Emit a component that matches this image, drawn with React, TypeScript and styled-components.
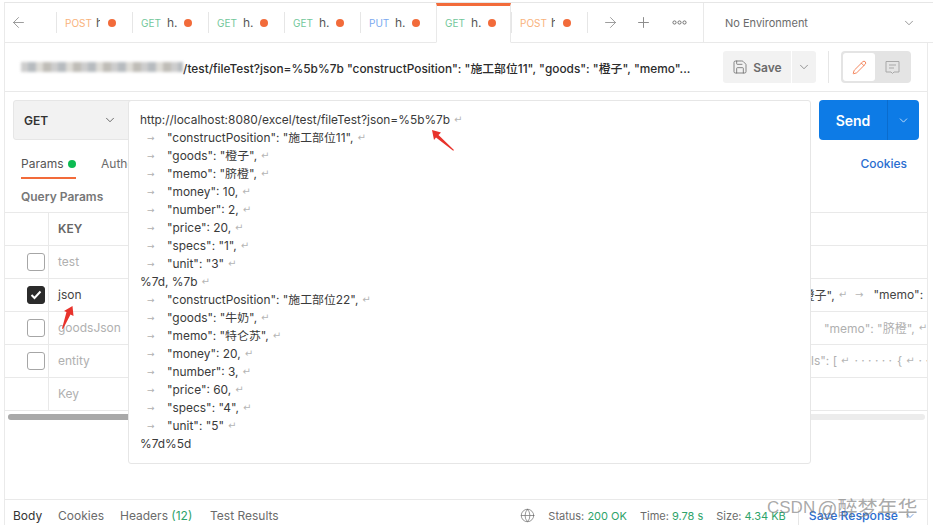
import React from "react";
import styled, { createGlobalStyle } from "styled-components";
import { ArrowLeft, ArrowRight, ChevronDown, Globe, Pencil, Plus, Save } from "lucide-react";

const GlobalStyle = createGlobalStyle`
  html, body { margin: 0; padding: 0; background: #fff; }
  body { font-family: Inter, "Noto Sans CJK SC", sans-serif; color: #333; overflow: hidden; }
`;

const Page = styled.div`
  position: relative;
  width: 933px;
  height: 525px;
  overflow: hidden;
  background: #fff;
  padding-top: 2px;
  box-sizing: border-box;
`;
const Frame = styled.div`
  height: 523px;
  border-top: 1px solid #e6e6e6;
  border-left: 1px solid #eaeaea;
  margin-left: 4px;
  display: flex;
  flex-direction: column;
  box-sizing: border-box;
`;
const TabBar = styled.div`
  height: 40px;
  display: flex;
  align-items: stretch;
  flex: none;
`;
const BackBox = styled.div`
  width: 51px;
  border-bottom: 1px solid #e9e9e9;
  box-sizing: border-box;
  display: flex;
  align-items: center;
  padding-left: 5px;
  color: #8c8c8c;
`;
const Tab = styled.div<{ $active?: boolean }>`
  width: ${(p) => (p.$active ? 75 : 76)}px;
  box-sizing: border-box;
  position: relative;
  display: flex;
  align-items: center;
  padding-left: ${(p) => (p.$active ? 8 : 9)}px;
  padding-bottom: ${(p) => (p.$active ? 3 : 0)}px;
  font-size: 10px;
  border-bottom: 1px solid ${(p) => (p.$active ? "transparent" : "#e9e9e9")};
  border-right: ${(p) => (p.$active ? "1px solid #e9e9e9" : "none")};
  border-left: ${(p) => (p.$active ? "1px solid #e9e9e9" : "none")};
  border-top: ${(p) => (p.$active ? "3px solid #f26b3a" : "none")};
  &::before {
    content: "";
    display: ${(p) => (p.$active ? "none" : "block")};
    position: absolute;
    left: 0;
    top: 9px;
    height: 21px;
    width: 1px;
    background: #e6e6e6;
  }
`;
const Method = styled.span<{ $color: string; $w: number }>`
  color: ${(p) => p.$color};
  width: ${(p) => p.$w}px;
  flex: none;
`;
const TabName = styled.span<{ $w: number; $clip: number }>`
  font-size: 12px;
  color: #555;
  width: ${(p) => p.$w}px;
  flex: none;
  white-space: nowrap;
  clip-path: inset(0 ${(p) => p.$clip}px 0 0);
`;
const Dot = styled.span`
  width: 8px;
  height: 8px;
  border-radius: 50%;
  background: #f26b3a;
  flex: none;
`;
const Tools = styled.div`
  width: 117px;
  box-sizing: border-box;
  border-bottom: 1px solid #e9e9e9;
  border-right: 1px solid #e9e9e9;
  display: flex;
  align-items: center;
  position: relative;
  color: #8c8c8c;
  &::before {
    content: "";
    position: absolute;
    left: 0;
    top: 9px;
    height: 21px;
    width: 1px;
    background: #e6e6e6;
  }
`;
const ToolSlot = styled.span<{ $w: number }>`
  width: ${(p) => p.$w}px;
  display: flex;
  justify-content: center;
  flex: none;
`;
const EnvBox = styled.div`
  flex: 1;
  border-bottom: 1px solid #e9e9e9;
  display: flex;
  align-items: center;
  justify-content: space-between;
  padding: 0 17px 0 21px;
  font-size: 11px;
  color: #6b6b6b;
`;
const Content = styled.div`
  flex: 1;
  min-height: 0;
  width: 922px;
  border-right: 1px solid #eaeaea;
  display: flex;
  flex-direction: column;
`;
const TitleRow = styled.div`
  height: 49px;
  flex: none;
  box-sizing: border-box;
  border-bottom: 1px solid #e9e9e9;
  display: flex;
  align-items: center;
  padding-left: 16px;
`;
const Blur = styled.span`
  display: block;
  width: 162px;
  height: 10px;
  flex: none;
  filter: blur(1.4px);
  background: repeating-linear-gradient(90deg, #c5c5c5 0 7px, #aab0b5 7px 15px, #d8d6d0 15px 22px, #b5b2ab 22px 30px);
  opacity: 0.85;
`;
const TitleText = styled.span`
  font-size: 11.85px;
  font-weight: 500;
  color: #2b2b2b;
  white-space: nowrap;
  width: 521px;
`;
const SaveBtn = styled.div`
  margin-left: 19px;
  width: 68px;
  height: 32px;
  background: #f2f2f2;
  border-radius: 3px 0 0 3px;
  display: flex;
  align-items: center;
  justify-content: center;
  gap: 5px;
  font-size: 12px;
  font-weight: 600;
  color: #6b6b6b;
`;
const SaveArrow = styled.div`
  margin-left: 1px;
  width: 24px;
  height: 32px;
  background: #f2f2f2;
  border-radius: 0 3px 3px 0;
  display: flex;
  align-items: center;
  justify-content: center;
  color: #6b6b6b;
`;
const VLine = styled.div`
  width: 1px;
  height: 32px;
  background: #e6e6e6;
  margin: 0 12px;
`;
const Toggle = styled.div`
  width: 70px;
  height: 32px;
  box-sizing: border-box;
  padding: 2px;
  background: #e4e4e4;
  border-radius: 4px;
  display: flex;
`;
const ToggleOn = styled.div`
  width: 32px;
  background: #fff;
  border-radius: 3px;
  display: flex;
  align-items: center;
  justify-content: center;
  color: #f26b3a;
`;
const ToggleOff = styled.div`
  flex: 1;
  display: flex;
  align-items: center;
  justify-content: center;
`;
const UrlRow = styled.div`
  height: 40px;
  flex: none;
  margin-top: 8px;
  padding-left: 8px;
  display: flex;
  justify-content: space-between;
  padding-right: 8px;
`;
const MethodSelect = styled.div`
  width: 130px;
  box-sizing: border-box;
  background: #f2f2f2;
  border: 1px solid #e6e6e6;
  border-radius: 3px;
  display: flex;
  align-items: center;
  justify-content: space-between;
  padding: 0 25px 0 10px;
  font-size: 12px;
  font-weight: 600;
  color: #333;
`;
const SendGroup = styled.div`
  width: 100px;
  background: #0d7be6;
  border-radius: 4px;
  display: flex;
  color: #fff;
`;
const SendLabel = styled.div`
  width: 68px;
  border-right: 1px solid #0a6cce;
  display: flex;
  align-items: center;
  justify-content: center;
  font-size: 14px;
  font-weight: 600;
`;
const SendArrow = styled.div`
  flex: 1;
  display: flex;
  align-items: center;
  justify-content: center;
`;
const SubTabs = styled.div`
  height: 39px;
  flex: none;
  box-sizing: border-box;
  padding: 8px 20px 0 16px;
  display: flex;
  align-items: center;
  font-size: 12px;
  color: #6b6b6b;
`;
const ParamsTab = styled.div`
  width: 55px;
  height: 31px;
  box-sizing: border-box;
  padding-top: 2px;
  border-bottom: 2px solid #f26b3a;
  display: flex;
  align-items: center;
  justify-content: space-between;
  color: #555;
  margin-right: 25px;
`;
const GreenDot = styled.span`
  width: 8px;
  height: 8px;
  border-radius: 50%;
  background: #0cbb52;
`;
const CookiesLink = styled.span`
  margin-left: auto;
  color: #2a6dd0;
  font-weight: 500;
`;
const QueryTitle = styled.div`
  height: 33px;
  flex: none;
  box-sizing: border-box;
  padding: 1px 0 0 16px;
  display: flex;
  align-items: center;
  font-size: 12px;
  font-weight: 600;
  color: #777;
`;
const Table = styled.div`
  flex: none;
  border-top: 1px solid #e9e9e9;
`;
const Row = styled.div`
  height: 33px;
  box-sizing: border-box;
  border-bottom: 1px solid #e9e9e9;
  display: grid;
  grid-template-columns: 44px 1fr;
  font-size: 12px;
`;
const CheckCell = styled.div`
  border-right: 1px solid #e9e9e9;
  display: flex;
  align-items: center;
  padding-left: 22px;
`;
const CheckBox = styled.span<{ $on?: boolean }>`
  width: 18px;
  height: 18px;
  box-sizing: border-box;
  border-radius: 3px;
  border: 1px solid ${(p) => (p.$on ? "#2b2b2b" : "#a6a6a6")};
  background: ${(p) => (p.$on ? "#2b2b2b" : "#fff")};
  display: flex;
  align-items: center;
  justify-content: center;
`;
const KeyCell = styled.div<{ $tone: string; $bold?: boolean }>`
  padding: 0 0 2px 9px;
  display: flex;
  align-items: center;
  color: ${(p) => p.$tone};
  font-weight: ${(p) => (p.$bold ? 600 : 400)};
  white-space: nowrap;
  overflow: hidden;
  position: relative;
`;
const RowValue = styled.span<{ $tone: string; $left: number }>`
  position: absolute;
  left: ${(p) => p.$left}px;
  color: ${(p) => p.$tone};
  font-size: 12px;
  display: flex;
  align-items: center;
`;
const Gap = styled.span<{ $w: number }>`
  display: inline-block;
  width: ${(p) => p.$w}px;
`;
const Scroll = styled.div`
  margin: 3px 2px 0 3px;
  height: 6px;
  border-radius: 3px;
  background: #ececec;
  flex: none;
`;
const ScrollThumb = styled.div`
  width: 60%;
  height: 6px;
  border-radius: 3px;
  background: #a9a9a9;
`;
const Footer = styled.div`
  margin-top: auto;
  height: 26px;
  flex: none;
  box-sizing: border-box;
  border-top: 1px solid #e9e9e9;
  display: flex;
  align-items: center;
  padding: 6px 11px 0 8px;
  font-size: 12px;
  color: #6b6b6b;
`;
const FootTab = styled.span<{ $w: number; $dark?: boolean }>`
  width: ${(p) => p.$w}px;
  flex: none;
  color: ${(p) => (p.$dark ? "#333" : "#6b6b6b")};
  white-space: nowrap;
`;
const Green = styled.span`
  color: #2ea36a;
`;
const StatusGroup = styled.div`
  margin-left: auto;
  display: flex;
  align-items: center;
  font-size: 11px;
  color: #6b6b6b;
  white-space: nowrap;
`;
const GlobeSlot = styled.span`
  display: flex;
  margin-right: 13px;
`;
const StatusItem = styled.span<{ $gap: number }>`
  margin-right: ${(p) => p.$gap}px;
`;
const FootDivider = styled.span`
  width: 1px;
  height: 18px;
  background: #e6e6e6;
  margin-right: 10px;
`;
const SaveResponse = styled.span`
  color: #2a6dd0;
  font-weight: 500;
  font-size: 12.2px;
  display: flex;
  align-items: center;
  gap: 6px;
`;
const Popup = styled.div`
  position: absolute;
  left: 128px;
  top: 100px;
  width: 683px;
  height: 364px;
  box-sizing: border-box;
  background: #fff;
  border: 1px solid #e6e6e6;
  border-radius: 3px;
  padding: 10px 11px;
  font-size: 11.9px;
  line-height: 18px;
  color: #3a3a3a;
`;
const PopupLine = styled.div`
  height: 18px;
  white-space: nowrap;
  display: flex;
  align-items: center;
`;
const TabMark = styled.span`
  width: 27px;
  flex: none;
  padding-left: 7px;
  box-sizing: border-box;
  color: #b0b0b0;
  font-size: 9px;
  font-family: "DejaVu Sans", sans-serif;
`;
const Ret = styled.span`
  color: #b5b5b5;
  font-size: 10px;
  margin-left: 4px;
  font-family: "DejaVu Sans", sans-serif;
`;
const Pointer = styled.svg<{ $x: number; $y: number }>`
  position: absolute;
  left: ${(p) => p.$x}px;
  top: ${(p) => p.$y}px;
`;
const Watermark = styled.div`
  position: absolute;
  left: 767px;
  top: 493px;
  font-size: 17px;
  color: rgba(120, 120, 120, 0.65);
  white-space: nowrap;
  font-family: "Liberation Sans", "Noto Sans CJK SC", sans-serif;
  display: flex;
  align-items: center;
  gap: 5px;
`;
const WatermarkName = styled.span`
  font-size: 20px;
  margin-left: -3px;
`;

const tabs = [
  { m: "POST", c: "#f9b27c", mw: 31, w: 12, clip: 8, n: "h" },
  { m: "GET", c: "#72c79a", mw: 26, w: 17, clip: 0, n: "h." },
  { m: "GET", c: "#72c79a", mw: 26, w: 17, clip: 0, n: "h." },
  { m: "GET", c: "#72c79a", mw: 26, w: 17, clip: 0, n: "h." },
  { m: "PUT", c: "#7ba9f0", mw: 26, w: 17, clip: 0, n: "h." },
  { m: "GET", c: "#72c79a", mw: 26, w: 17, clip: 0, n: "h.", active: true },
  { m: "POST", c: "#f9b27c", mw: 31, w: 12, clip: 8, n: "h" },
];

const item = (text: string) => ({ text, tab: true });
const lines = [
  { text: "http://localhost:8080/excel/test/fileTest?json=%5b%7b", tab: false },
  item('"constructPosition": "施工部位11",'),
  item('"goods": "橙子",'),
  item('"memo": "脐橙",'),
  item('"money": 10,'),
  item('"number": 2,'),
  item('"price": 20,'),
  item('"specs": "1",'),
  item('"unit": "3"'),
  { text: "%7d, %7b", tab: false },
  item('"constructPosition": "施工部位22",'),
  item('"goods": "牛奶",'),
  item('"memo": "特仑苏",'),
  item('"money": 20,'),
  item('"number": 3,'),
  item('"price": 60,'),
  item('"specs": "4",'),
  item('"unit": "5"'),
];

const Dots = () => (
  <svg width="15" height="5" viewBox="0 0 15 5" fill="none" stroke="#707070" strokeWidth="1">
    <circle cx="2.5" cy="2.5" r="1.6" />
    <circle cx="7.5" cy="2.5" r="1.6" />
    <circle cx="12.5" cy="2.5" r="1.6" />
  </svg>
);

const Comment = () => (
  <svg width="15" height="15" viewBox="0 0 15 15" fill="none" stroke="#a8a8a8" strokeWidth="1">
    <path d="M1 1.5h13v10.5H9l-1.5 1.5L6 12H1z" />
    <path d="M4 5h7M4 8h5" />
  </svg>
);

export default function App() {
  return (
    <Page>
      <GlobalStyle />
      <Frame>
        <TabBar>
          <BackBox>
            <ArrowLeft size={17} strokeWidth={1.2} />
          </BackBox>
          {tabs.map((t, i) => (
            <Tab key={i} $active={t.active}>
              <Method $color={t.c} $w={t.mw}>{t.m}</Method>
              <TabName $w={t.w} $clip={t.clip}>{t.n}</TabName>
              <Dot />
            </Tab>
          ))}
          <Tools>
            <ToolSlot $w={47}>
              <ArrowRight size={17} strokeWidth={1.2} />
            </ToolSlot>
            <ToolSlot $w={19}>
              <Plus size={17} strokeWidth={1.4} />
            </ToolSlot>
            <ToolSlot $w={53}>
              <Dots />
            </ToolSlot>
          </Tools>
          <EnvBox>
            No Environment
            <ChevronDown size={14} strokeWidth={1.2} />
          </EnvBox>
        </TabBar>
        <Content>
          <TitleRow>
            <Blur />
            <TitleText>/test/fileTest?json=%5b%7b "constructPosition": "施工部位11", "goods": "橙子", "memo"...</TitleText>
            <SaveBtn>
              <Save size={16} strokeWidth={1.2} />
              Save
            </SaveBtn>
            <SaveArrow>
              <ChevronDown size={14} strokeWidth={1.2} />
            </SaveArrow>
            <VLine />
            <Toggle>
              <ToggleOn>
                <Pencil size={15} strokeWidth={1.3} />
              </ToggleOn>
              <ToggleOff>
                <Comment />
              </ToggleOff>
            </Toggle>
          </TitleRow>
          <UrlRow>
            <MethodSelect>
              GET
              <ChevronDown size={14} strokeWidth={1.2} />
            </MethodSelect>
            <SendGroup>
              <SendLabel>Send</SendLabel>
              <SendArrow>
                <ChevronDown size={13} strokeWidth={1.3} />
              </SendArrow>
            </SendGroup>
          </UrlRow>
          <SubTabs>
            <ParamsTab>
              Params
              <GreenDot />
            </ParamsTab>
            Authorization
            <CookiesLink>Cookies</CookiesLink>
          </SubTabs>
          <QueryTitle>Query Params</QueryTitle>
          <Table>
            <Row>
              <CheckCell />
              <KeyCell $tone="#666" $bold>KEY</KeyCell>
            </Row>
            <Row>
              <CheckCell>
                <CheckBox />
              </CheckCell>
              <KeyCell $tone="#b0b0b0">test</KeyCell>
            </Row>
            <Row>
              <CheckCell>
                <CheckBox $on>
                  <svg width="12" height="10" viewBox="0 0 12 10" fill="none" stroke="#fff" strokeWidth="2">
                    <path d="M1.5 5l3 3 6-6.5" />
                  </svg>
                </CheckBox>
              </CheckCell>
              <KeyCell $tone="#444">
                json
                <RowValue $tone="#444" $left={748}>
                  "橙子",<Ret>↵</Ret>
                  <Gap $w={4} />
                  <Ret>→</Ret>
                  <Gap $w={10} />
                  "memo": "
                </RowValue>
              </KeyCell>
            </Row>
            <Row>
              <CheckCell>
                <CheckBox />
              </CheckCell>
              <KeyCell $tone="#b0b0b0">
                goodsJson
                <RowValue $tone="#b0b0b0" $left={775}>"memo": "脐橙",<Ret>↵</Ret></RowValue>
              </KeyCell>
            </Row>
            <Row>
              <CheckCell>
                <CheckBox />
              </CheckCell>
              <KeyCell $tone="#b0b0b0">
                entity
                <RowValue $tone="#b0b0b0" $left={762}>ls": [<Ret>↵</Ret><Gap $w={5} />· · · · · ·<Gap $w={5} />{"{"}<Ret>↵</Ret><Gap $w={4} />· ·</RowValue>
              </KeyCell>
            </Row>
            <Row>
              <CheckCell />
              <KeyCell $tone="#b0b0b0">Key</KeyCell>
            </Row>
          </Table>
          <Scroll>
            <ScrollThumb />
          </Scroll>
          <Footer>
            <FootTab $w={45} $dark>Body</FootTab>
            <FootTab $w={62}>Cookies</FootTab>
            <FootTab $w={90}>
              Headers <Green>(12)</Green>
            </FootTab>
            <FootTab $w={80}>Test Results</FootTab>
            <StatusGroup>
              <GlobeSlot>
                <Globe size={15} strokeWidth={1.1} />
              </GlobeSlot>
              <StatusItem $gap={13}>
                Status: <Green>200 OK</Green>
              </StatusItem>
              <StatusItem $gap={13}>
                Time: <Green>9.78 s</Green>
              </StatusItem>
              <StatusItem $gap={12}>
                Size: <Green>4.34 KB</Green>
              </StatusItem>
              <FootDivider />
              <SaveResponse>
                Save Response
                <ChevronDown size={12} strokeWidth={1.3} />
              </SaveResponse>
            </StatusGroup>
          </Footer>
        </Content>
      </Frame>
      <Popup>
        {lines.map((l, i) => (
          <PopupLine key={i}>
            {l.tab && <TabMark>→</TabMark>}
            {l.text}
            <Ret>↵</Ret>
          </PopupLine>
        ))}
        <PopupLine>%7d%5d</PopupLine>
      </Popup>
      <Pointer $x={430} $y={129} width="25" height="24" viewBox="0 0 25 24" fill="#e8332c">
        <path d="M2 1l9 2.5-2.5 2.5L24 21l-.8.8L6 8.5 4 11z" />
      </Pointer>
      <Pointer $x={60} $y={305} width="15" height="25" viewBox="0 0 15 25" fill="#e8332c">
        <path d="M12.5 1l1 10-3-1.5L3 24l-1-.4L6.5 7 4 6z" />
      </Pointer>
      <Watermark>
        CSDN
        <WatermarkName>@醉梦年华</WatermarkName>
      </Watermark>
    </Page>
  );
}
